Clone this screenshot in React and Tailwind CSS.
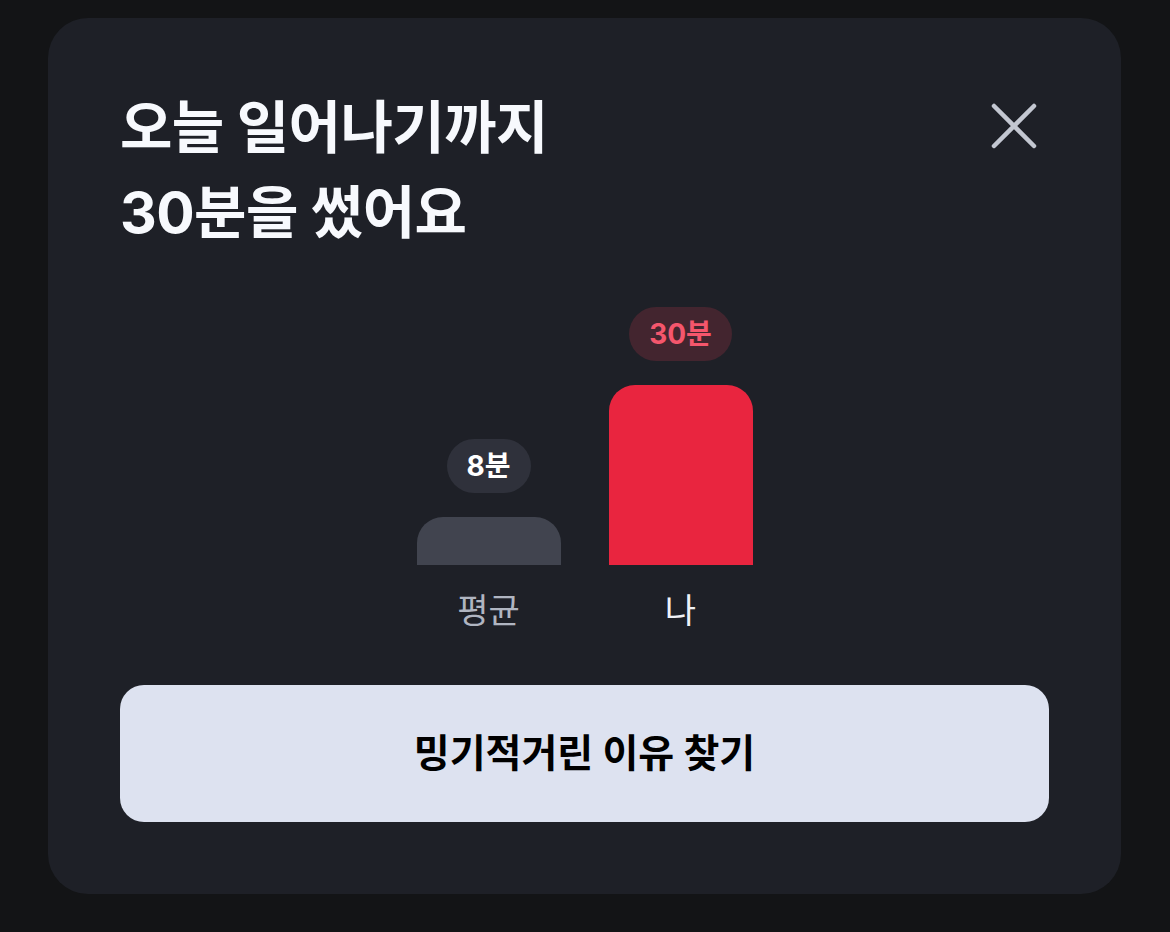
const font = { fontFamily: 'Inter, "Noto Sans CJK KR", "Noto Sans", sans-serif' };

const Bar = ({ value, label, barClass, bubbleClass, labelClass, height }) => (
  <div className="flex w-[144px] flex-col items-center">
    <div className={`flex h-[54px] items-center rounded-full px-[20px] text-[28px] font-bold ${bubbleClass}`}>
      {value}
    </div>
    <div className={`mt-6 w-full rounded-t-[26px] ${barClass} ${height}`}></div>
    <div className={`mt-[26px] h-10 text-[34px] leading-10 ${labelClass}`}>{label}</div>
  </div>
);

export default function App() {
  return (
    <div className="min-h-screen bg-[#131416] px-12 pt-[18px]" style={font}>
      <div className="flex w-[1073px] flex-col rounded-[40px] bg-[#1e2027] px-[72px] pb-[72px] pt-[70px]">
        <div className="flex items-start justify-between">
          <h1 className="-mt-[3px] text-[57px] font-bold leading-[85px] tracking-[-0.01em] text-[#f7f9fd]">
            오늘 일어나기까지
            <br />
            30분을 썼어요
          </h1>
          <button className="mr-[11px] mt-[14px] text-[#c3c7d1]">
            <svg width="48" height="48" viewBox="0 0 48 48" fill="none" stroke="currentColor" strokeWidth="4.5" strokeLinecap="round">
              <path d="M4 4L44 44M44 4L4 44" />
            </svg>
          </button>
        </div>

        <div className="mt-[52px] flex items-end justify-center gap-12">
          <Bar
            value="8분"
            label="평균"
            height="h-[48px]"
            barClass="bg-[#41444f]"
            bubbleClass="bg-[#2f313b] text-white"
            labelClass="text-[#b0b5c1]"
          />
          <Bar
            value="30분"
            label="나"
            height="h-[180px]"
            barClass="bg-[#e9253f]"
            bubbleClass="bg-[#43252f] text-[#f5566c]"
            labelClass="text-[#f0f2f6]"
          />
        </div>

        <button className="mt-[54px] h-[137px] w-full rounded-[24px] bg-[#dde2f0] text-[39px] font-bold text-black">
          밍기적거린 이유 찾기
        </button>
      </div>
    </div>
  );
}
